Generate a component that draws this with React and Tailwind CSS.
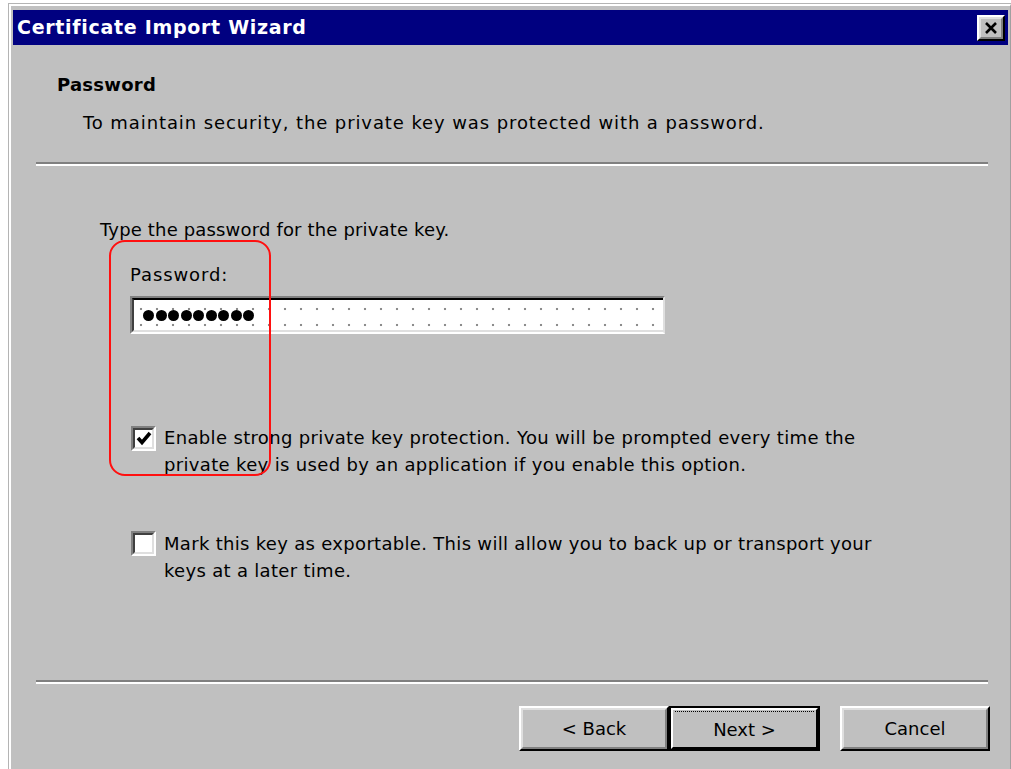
import React from 'react';

// Win2000-style 3D edges, scaled up about 1.9x from the original 1px look
const raised = 'border-2 border-t-white border-l-white border-b-black border-r-black';
const raisedInner = 'border-2 border-t-[#dfdfdf] border-l-[#dfdfdf] border-b-[#808080] border-r-[#808080]';

const Button = ({ label, isDefault }) => {
  if (isDefault) {
    return (
      <div className="w-[151px] h-[45px] border-2 border-black flex">
        <div className={`flex-1 flex ${raised} border-b-[#404040] border-r-[#404040]`}>
          <div className="flex-1 flex flex-col bg-[#c0c0c0]">
            <div className="mx-[2px] mt-[1px] border-t border-dotted border-black" />
            <div className="flex-1 flex items-center justify-center">{label}</div>
          </div>
        </div>
      </div>
    );
  }
  return (
    <div className={`w-[150px] h-[45px] flex ${raised}`}>
      <div className={`flex-1 flex items-center justify-center ${raisedInner}`}>{label}</div>
    </div>
  );
};

const Checkbox = ({ checked }) => (
  <div className="w-[25px] h-[25px] shrink-0 flex border-2 border-t-[#808080] border-l-[#808080] border-b-white border-r-white">
    <div className="flex-1 flex items-center justify-center bg-white border-2 border-t-[#404040] border-l-[#404040] border-b-[#dfdfdf] border-r-[#dfdfdf]">
      {checked && (
        <svg width="16" height="15" viewBox="0 0 16 15">
          <polyline points="2,7 6,11.5 14,2" fill="none" stroke="black" strokeWidth="3.6" />
        </svg>
      )}
    </div>
  </div>
);

const Separator = () => (
  <div className="ml-[23px] w-[952px] border-t-2 border-b-2 border-t-[#808080] border-b-white" />
);

export default function App() {
  return (
    <div className="w-[1011px] h-[769px] bg-white overflow-hidden font-['DejaVu_Sans',sans-serif] text-[18px] text-black">
      <div className="relative ml-2 mt-[3px] h-[766px] border-l border-t border-[#b4b4b4] flex">
        <div className="flex-1 flex flex-col border-l-2 border-t-2 border-white bg-[#c0c0c0] pl-[2px] pt-1 pr-[2px] border-r border-r-[#a0a0a0]">
          {/* title bar */}
          <div className="h-[35px] bg-[#000080] flex items-center justify-between pl-1 pr-[3px]">
            <span className="text-white font-bold text-[19px] tracking-[0.7px]">Certificate Import Wizard</span>
            <div className={`w-[28px] h-[26px] flex ${raised}`}>
              <div className={`flex-1 flex items-center justify-center bg-[#c0c0c0] ${raisedInner}`}>
                <svg width="14" height="12" viewBox="0 0 14 12">
                  <path d="M2 1 L12 11 M12 1 L2 11" stroke="black" strokeWidth="2.6" />
                </svg>
              </div>
            </div>
          </div>

          {/* header */}
          <div className="pl-[44px] mt-[28px] leading-[24px] font-bold tracking-[0.25px]">Password</div>
          <div className="pl-[70px] mt-[14px] leading-[24px] tracking-[0.9px]">To maintain security, the private key was protected with a password.</div>
          <div className="mt-[27px]">
            <Separator />
          </div>

          {/* body */}
          <div className="pl-[87px] mt-[52px] leading-[24px] tracking-[0.16px]">Type the password for the private key.</div>
          <div className="pl-[117px] mt-[21px] leading-[24px] tracking-[0.9px]">Password:</div>
          <div className="ml-[117px] mt-[9px] w-[535px] h-[38px] flex border-2 border-t-[#808080] border-l-[#808080] border-b-white border-r-[#dfdfdf]">
            <div className="flex-1 flex items-center pl-[9px] gap-[1.5px] bg-white bg-[radial-gradient(circle,#8c8c8c_1px,transparent_1.6px)] bg-[length:16px_16px] bg-[position:-1px_1px] border-t-2 border-l-2 border-t-black border-l-[#404040] border-b-2 border-b-[#dfdfdf]">
              {Array.from({ length: 9 }).map((_, i) => (
                <span key={i} className="w-[11px] h-[11px] rounded-full bg-black" />
              ))}
            </div>
          </div>

          <div className="ml-[118px] mt-[90px] flex gap-[8px] leading-[27px] tracking-[0.34px]">
            <div className="pt-[2px]">
              <Checkbox checked />
            </div>
            <div className="whitespace-nowrap">
              Enable strong private key protection. You will be prompted every time the
              <br />
              private key is used by an application if you enable this option.
            </div>
          </div>

          <div className="ml-[118px] mt-[52px] flex gap-[8px] leading-[27px] tracking-[0.31px]">
            <div className="pt-[1px]">
              <Checkbox />
            </div>
            <div className="whitespace-nowrap">
              Mark this key as exportable. This will allow you to back up or transport your
              <br />
              keys at a later time.
            </div>
          </div>

          <div className="mt-auto mb-[85px]">
            <Separator />
          </div>
        </div>

        {/* buttons sit over the bottom of the body */}
        <div className="absolute left-[510px] top-[702px] flex">
          <Button label="< Back" />
          <Button label="Next >" isDefault />
          <div className="ml-[20px]">
            <Button label="Cancel" />
          </div>
        </div>

        {/* red marker drawn round the password area */}
        <div className="absolute left-[100px] top-[236px] w-[162px] h-[236px] rounded-[16px] border-2 border-[#ff1010] pointer-events-none" />
      </div>
    </div>
  );
}
